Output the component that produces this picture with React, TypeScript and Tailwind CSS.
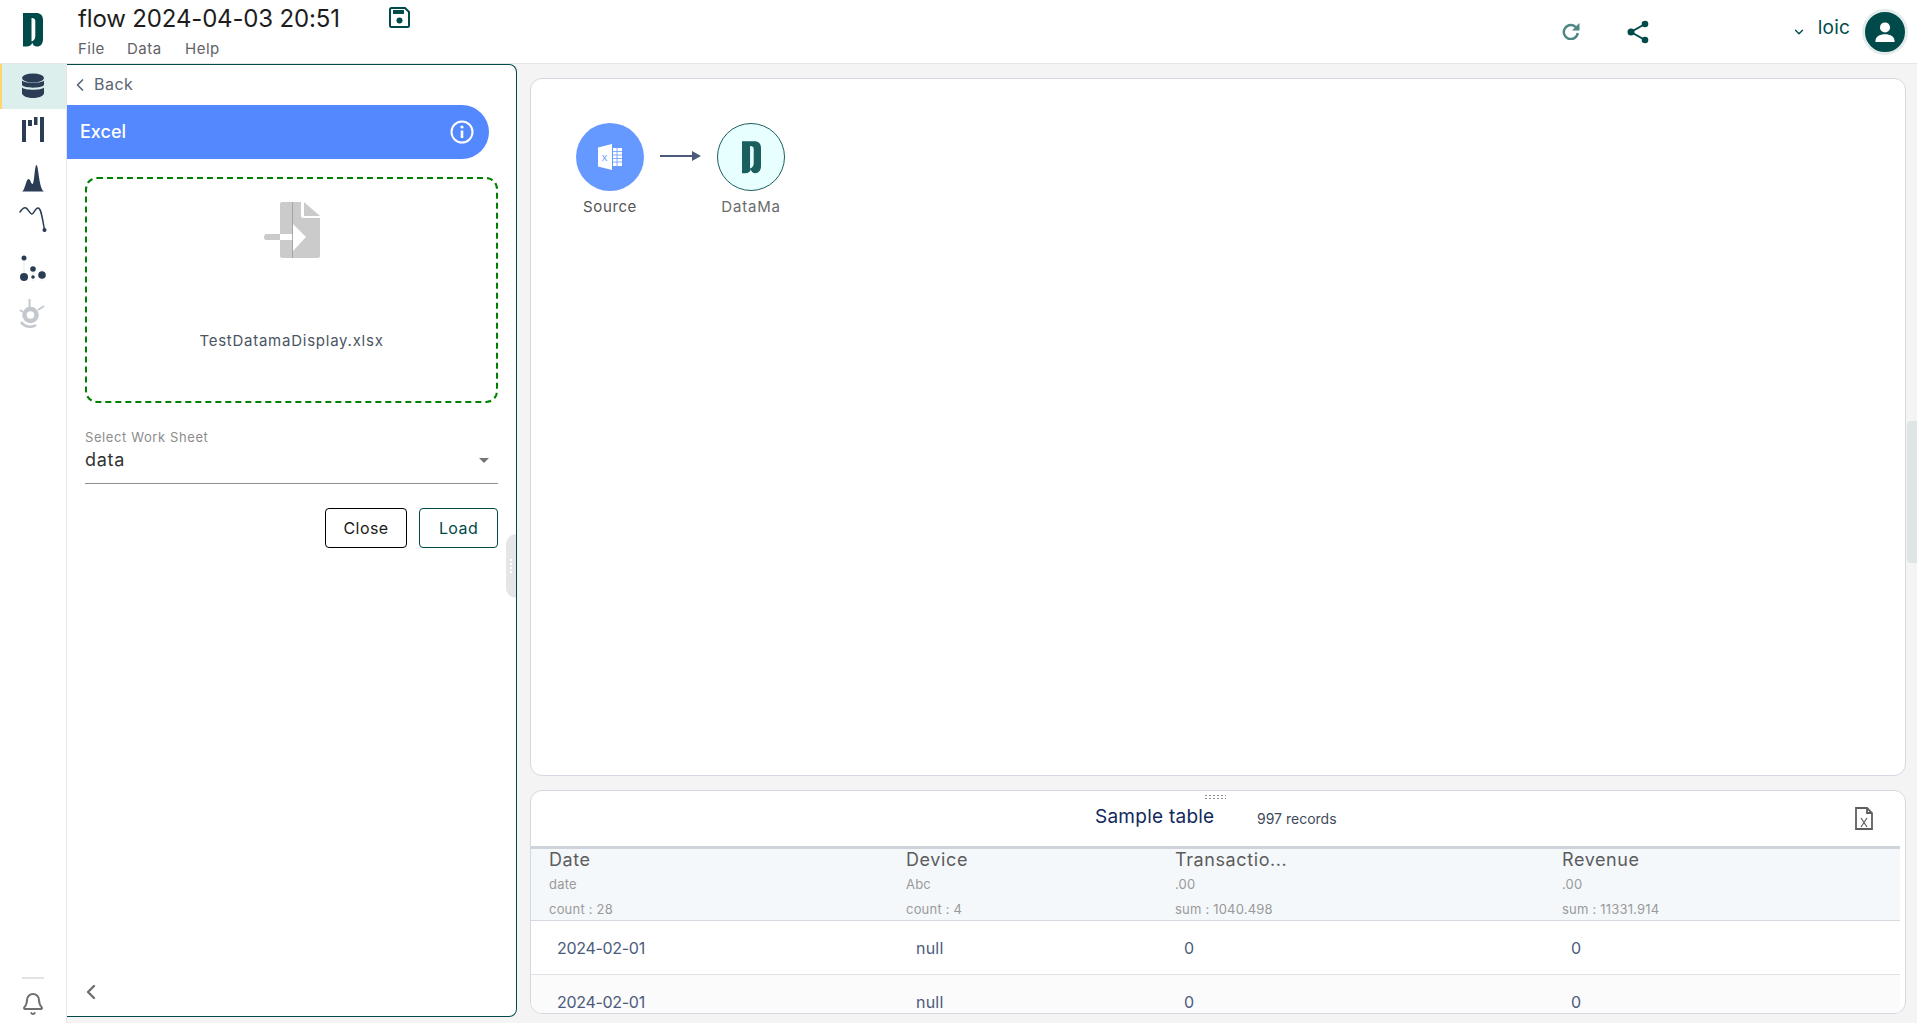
import React from "react";
import { ChevronLeft, ChevronDown, Bell } from "lucide-react";

const Logo = ({ className, color }: { className: string; color: string }) => (
  <svg viewBox="0 0 20 34" className={className}>
    <path fill={color} fillRule="evenodd" d="M0 0H13C17.500 0 20 2.500 20 7V26C20 31 17.500 33.500 14 33.500C11.500 33.500 9.800 32 9.300 29.500C8.800 32 6.500 33.500 3.500 33.500H0ZM8.500 5V28.500C11 27.500 12.300 26 12.300 23V8C12.300 6 11 5 8.500 5Z" />
  </svg>
);

const Db = () => (
  <svg viewBox="0 0 22 26" className="w-[22px] h-[26px]">
    <ellipse cx="11" cy="5" rx="11" ry="4.600" fill="#2a3d55" />
    <path fill="#2a3d55" d="M0 7.500C2 10.500 20 10.500 22 7.500V12C20 15.500 2 15.500 0 12Z" />
    <path fill="#2a3d55" d="M0 14.500C2 17.500 20 17.500 22 14.500V20.500C20 26.500 2 26.500 0 20.500Z" />
  </svg>
);
const Bars = () => (
  <svg viewBox="0 0 22 25" className="w-[22px] h-[25px]" fill="#2a3d55">
    <rect x="0" y="3" width="4" height="22" />
    <rect x="6" y="3" width="4" height="6" />
    <rect x="12" y="0" width="3.500" height="8" />
    <rect x="18" y="0" width="4" height="25" />
  </svg>
);
const Peaks = () => (
  <svg viewBox="0 0 22 27" className="w-[22px] h-[27px]" fill="#2a3d55">
    <path d="M0 26.500C3 25.500 4 14 6.500 14C8.500 14 9 19 10.500 19C12.500 19 12.500 0 14.500 0C16.500 0 17 24.500 22 26.500Z" />
  </svg>
);
const Line = () => (
  <svg viewBox="0 0 28 26" className="w-[28px] h-[26px]" fill="none" stroke="#2a3d55" strokeWidth="1.500" strokeLinecap="round">
    <path d="M1 6C3 3 5 1 7 2C9 3 11 8 13 8C15 8 16 2 19 2C22 2 23 10 25.500 24" />
    <circle cx="25.500" cy="24" r="1.300" fill="#2a3d55" />
  </svg>
);
const Dots = () => (
  <svg viewBox="0 0 28 28" className="w-[28px] h-[28px]">
    <path d="M5 3V26M14 12V26M23 14V26" stroke="#e5e7eb" strokeWidth="1" />
    <circle cx="5" cy="3" r="2.500" fill="#2a3d55" />
    <circle cx="5" cy="22" r="4" fill="#2a3d55" />
    <circle cx="14" cy="14" r="2.800" fill="#2a3d55" />
    <circle cx="14" cy="22" r="1.800" fill="#2a3d55" />
    <circle cx="23" cy="20" r="3.800" fill="#2a3d55" />
  </svg>
);
const Gear = () => (
  <svg viewBox="0 0 26 30" className="w-[26px] h-[30px]" fill="none" stroke="#c4c8cc">
    <circle cx="11.500" cy="17" r="6" strokeWidth="4.500" />
    <path d="M10.500 1V9" strokeWidth="2" />
    <path d="M19 12L25 8" strokeWidth="2" />
    <path d="M2 24C5 29 13 30 17 27" strokeWidth="2.500" />
    <path d="M1 12L4 14" strokeWidth="2" />
  </svg>
);

const ExcelMini = () => (
  <svg viewBox="0 0 24 26" className="w-[24px] h-[26px]">
    <path fill="#fff" d="M0 3.500L14 0V26L0 22.500Z" />
    <text x="3.500" y="16.500" fontSize="9" fontFamily="Liberation Sans, sans-serif" fill="#6699ff">X</text>
    <path fill="#fff" d="M15 4H24V22H15Z" />
    <path stroke="#6699ff" strokeWidth="0.800" d="M15 7.500H24M15 11H24M15 14.500H24M15 18H24M19 4V22" />
  </svg>
);

const cols = "grid grid-cols-[357px_269px_387px_1fr]";

export default function App() {
  return (
    <div className="relative h-[1023px] w-[1917px] flex flex-col overflow-hidden bg-white text-[#333] font-['Inter','Liberation_Sans',sans-serif]">
      <header className="h-[64px] shrink-0 border-b border-[#e6e6e6] flex bg-white">
        <div className="w-[66px] flex justify-center pt-[13px] shrink-0">
          <Logo className="w-[20px] h-[34px]" color="#014a4a" />
        </div>
        <div className="pl-[12px] w-[460px]">
          <div className="flex h-[37px] items-start">
            <div className="text-[24px] leading-[37px] tracking-[-0.15px] text-[#1d1d1d] w-[311px]">flow 2024-04-03 20:51</div>
            <svg viewBox="0 0 21 21" className="w-[21px] h-[21px] mt-[7px]" fill="none">
              <path d="M2.500 1H16L20 5V18.500C20 19.300 19.300 20 18.500 20H2.500C1.700 20 1 19.300 1 18.500V2.500C1 1.700 1.700 1 2.500 1Z" stroke="#014a4a" strokeWidth="2" />
              <rect x="4" y="3" width="11" height="4" fill="#014a4a" />
              <circle cx="10.500" cy="13.500" r="3" fill="#014a4a" />
            </svg>
          </div>
          <nav className="flex text-[15px] leading-[20px] tracking-[0.5px] text-[#5f6368] mt-[2px]">
            <span className="w-[49px]">File</span>
            <span className="w-[58px]">Data</span>
            <span>Help</span>
          </nav>
        </div>
        <div className="flex-1 flex items-center justify-end pr-[9px]">
          <svg viewBox="0 0 18 18" className="w-[18px] h-[18px] mr-[47px] mt-[-2px]" fill="none">
            <path d="M14.200 5.500A7 7 0 1 0 15.800 11" stroke="#4f8583" strokeWidth="2.400" />
            <path d="M17.500 1V8.500H10Z" fill="#4f8583" />
          </svg>
          <svg viewBox="0 0 22 24" className="w-[22px] h-[24px] mr-[143px]">
            <path d="M18 4L4 12L18 20" stroke="#014a4a" strokeWidth="2" fill="none" />
            <circle cx="18" cy="4" r="3.300" fill="#014a4a" />
            <circle cx="4" cy="12" r="3.500" fill="#014a4a" />
            <circle cx="18" cy="20" r="3.300" fill="#014a4a" />
          </svg>
          <ChevronDown className="w-[14px] h-[14px] text-[#014a4a] mr-[12px]" strokeWidth={2.4} />
          <span className="text-[19px] tracking-[0.2px] text-[#014a4a] mr-[12px] mt-[-6px]">loic</span>
          <div className="w-[46px] h-[46px] rounded-full bg-[#014a4a] border-[3px] border-[#e3eceb] flex items-center justify-center">
            <svg viewBox="0 0 24 24" className="w-[22px] h-[22px]" fill="#fff">
              <circle cx="12" cy="7" r="5.500" />
              <path d="M1.500 23C1.500 16.500 6 14.500 12 14.500C18 14.500 22.500 16.500 22.500 23Z" />
            </svg>
          </div>
        </div>
      </header>

      <div className="flex-1 flex min-h-0 bg-[#f4f4f4]">
        <aside className="w-[67px] shrink-0 bg-white border-r border-[#e6e6e6] flex flex-col items-center">
          <div className="w-full h-[45px] bg-[#dcefed] border-l-2 border-[#ffd770] flex items-center justify-center pr-[2px] pb-[2px]"><Db /></div>
          <div className="mt-[8px]"><Bars /></div>
          <div className="mt-[23px]"><Peaks /></div>
          <div className="mt-[14px]"><Line /></div>
          <div className="mt-[23px]"><Dots /></div>
          <div className="mt-[15px] pr-[2px]"><Gear /></div>
          <div className="mt-auto mb-[6px] flex flex-col items-center">
            <div className="w-[22px] h-[2px] bg-[#e2e2e2] mb-[12px]" />
            <Bell className="w-[24px] h-[26px] text-[#6f6f6f]" strokeWidth={2} />
          </div>
        </aside>

        <section className="relative w-[450px] shrink-0 mb-[6px] bg-white border-t border-r border-b border-[#014a4a] rounded-tr-[8px] rounded-br-[8px] flex flex-col">
          <div className="h-[40px] flex items-center pl-[3px] text-[16px] tracking-[0.5px] text-[#5a6472]">
            <ChevronLeft className="w-[20px] h-[20px] mr-[4px]" strokeWidth={2} />
            <span className="mt-[-3px]">Back</span>
          </div>
          <div className="h-[54px] w-[422px] bg-[#5488ff] rounded-r-[27px] flex items-center justify-between pl-[13px] pr-[15px] text-white">
            <span className="text-[18px] font-medium mt-[-1px]">Excel</span>
            <svg viewBox="0 0 24 24" className="w-[24px] h-[24px]" fill="none" stroke="#fff" strokeWidth="2">
              <circle cx="12" cy="12" r="10.500" />
              <path d="M12 10.500V18" strokeWidth="2.600" />
              <circle cx="12" cy="7" r="1.600" fill="#fff" stroke="none" />
            </svg>
          </div>
          <div className="ml-[18px] mr-[18px] mt-[18px] h-[226px] border-2 border-dashed border-[#008000] rounded-[12px] flex flex-col items-center">
            <svg viewBox="0 0 56 56" className="w-[56px] h-[56px] mt-[23px]" fill="#cbcbcb">
              <path d="M16 2C16 .9 16.900 0 18 0H37V14C37 15 38 16 39 16H56V54C56 55.100 55.100 56 54 56H18C16.900 56 16 55.100 16 54V38H2C.9 38 0 37 0 35.500C0 34 .9 32 2 32H16Z" />
              <path d="M40 0L56 14H40Z" />
              <path d="M16 32H29V22L42 35L29 49V38H16Z" fill="#fff" />
              <path d="M28.500 0V56" stroke="#9a9a9a" strokeWidth="0.800" />
            </svg>
            <div className="mt-[73px] text-[15px] leading-[20px] tracking-[0.75px] text-[#4b5563]">TestDatamaDisplay.xlsx</div>
          </div>
          <div className="mx-[18px] mt-[26px] border-b border-[#8f8f8f] h-[55px] flex flex-col">
            <div className="text-[13px] leading-[16px] tracking-[0.6px] text-[#8c8c8c]">Select Work Sheet</div>
            <div className="flex items-center justify-between pr-[9px] mt-[3px]">
              <span className="text-[18px] leading-[24px] tracking-[0.7px] text-[#333]">data</span>
              <span className="w-0 h-0 border-l-[5px] border-r-[5px] border-t-[5px] border-l-transparent border-r-transparent border-t-[#757575]" />
            </div>
          </div>
          <div className="flex justify-end gap-[12px] mr-[18px] mt-[24px]">
            <button className="w-[82px] h-[40px] border border-black rounded-[4px] text-[16px] tracking-[0.4px] text-[#1a1a1a]">Close</button>
            <button className="w-[79px] h-[40px] border border-[#014a4a] rounded-[4px] text-[16px] tracking-[0.4px] text-[#014a4a]">Load</button>
          </div>
          <div className="mt-auto h-[48px] pl-[12px] flex items-start pt-[12px]">
            <ChevronLeft className="w-[24px] h-[24px] text-[#6f6f6f]" strokeWidth={2.4} />
          </div>
          <div className="absolute right-0 top-[469px] w-[10px] h-[64px] bg-[#e6e6e6] rounded-l-[10px] flex items-center justify-center">
            <span className="w-[2px] h-[14px] border-l-2 border-dotted border-white" />
          </div>
        </section>

        <main className="flex-1 min-w-0 pl-[13px] pr-[11px] pt-[14px] pb-[9px] flex flex-col gap-[14px]">
          <div className="h-[698px] shrink-0 bg-white border border-[#d3d8e0] rounded-[12px] pt-[44px] pl-[45px]">
            <div className="flex items-start">
              <div className="w-[68px] flex flex-col items-center">
                <div className="w-[68px] h-[68px] rounded-full bg-[#6699ff] flex items-center justify-center"><ExcelMini /></div>
                <div className="text-[15px] leading-[20px] tracking-[0.6px] text-[#555] mt-[6px] whitespace-nowrap">Source</div>
              </div>
              <svg viewBox="0 0 42 12" className="w-[42px] h-[12px] ml-[16px] mr-[15px] mt-[27px]">
                <path d="M0 6H32" stroke="#4c5a7d" strokeWidth="2" />
                <path d="M32 1L41 6L32 11Z" fill="#4c5a7d" />
              </svg>
              <div className="w-[68px] flex flex-col items-center">
                <div className="w-[68px] h-[68px] rounded-full bg-[#e8ffff] border border-[#1b5e5e] flex items-center justify-center">
                  <Logo className="w-[19px] h-[33px]" color="#1b5e5e" />
                </div>
                <div className="text-[15px] leading-[20px] tracking-[0.8px] text-[#6b6b6b] mt-[6px]">DataMa</div>
              </div>
            </div>
          </div>

          <div className="flex-1 min-h-0 bg-white border border-[#d3d8e0] rounded-[12px] overflow-hidden flex flex-col">
            <div className="relative h-[55px] shrink-0 flex items-center">
              <div className="absolute left-[673px] top-[3px] w-[22px] h-[7px] bg-[radial-gradient(#8f8f8f_1px,transparent_1px)] bg-[length:4px_3px]" />
              <span className="ml-[564px] text-[19px] tracking-[0.25px] text-[#10295c] mt-[-3px] w-[162px]">Sample table</span>
              <span className="text-[14px] text-[#3f4a5a] mt-[-1px]">997 records</span>
              <svg viewBox="0 0 18 23" className="absolute right-[32px] top-[16px] w-[18px] h-[23px]" fill="none" stroke="#5f5f5f" strokeWidth="1.800">
                <path d="M1 1H12L17 6V22H1Z" />
                <path d="M12 1V6H17" />
                <path d="M6 11L12 20M12 11L6 20" strokeWidth="1.200" />
              </svg>
            </div>
            <div className="mr-[5px] flex-1 min-h-0 overflow-hidden">
              <div className={`${cols} h-[75px] bg-[#f4f8fb] border-t-[3px] border-b border-t-[#cfd4da] border-b-[#d5dae0] pl-[18px]`}>
                {[
                  ["Date", "date", "count : 28"],
                  ["Device", "Abc", "count : 4"],
                  ["Transactio...", ".00", "sum : 1040.498"],
                  ["Revenue", ".00", "sum : 11331.914"],
                ].map((c) => (
                  <div key={c[0]} className="flex flex-col">
                    <div className="text-[18px] leading-[22px] tracking-[0.6px] text-[#5c5c5c]">{c[0]}</div>
                    <div className="text-[13px] leading-[25px] tracking-[0.2px] mt-[1px] text-[#9a9a9a]">{c[1]}</div>
                    <div className="text-[13px] leading-[25px] tracking-[0.2px] text-[#9a9a9a]">{c[2]}</div>
                  </div>
                ))}
              </div>
              {[0, 1].map((r) => (
                <div key={r} className={`${cols} h-[54px] pl-[26px] items-center text-[16px] text-[#4c5a7d] border-b border-[#dfe3e8] ${r ? "bg-[#fbfbfb]" : ""}`}>
                  <span className="tracking-[-0.3px]">2024-02-01</span>
                  <span className="pl-[2px] tracking-[0.2px]">null</span>
                  <span className="ml-[1px]">0</span>
                  <span className="pl-[1px]">0</span>
                </div>
              ))}
            </div>
          </div>
        </main>
      </div>
      <div className="absolute right-0 top-[421px] w-[10px] h-[142px] bg-[#dde5e5] rounded-l-[4px]" />
    </div>
  );
}
